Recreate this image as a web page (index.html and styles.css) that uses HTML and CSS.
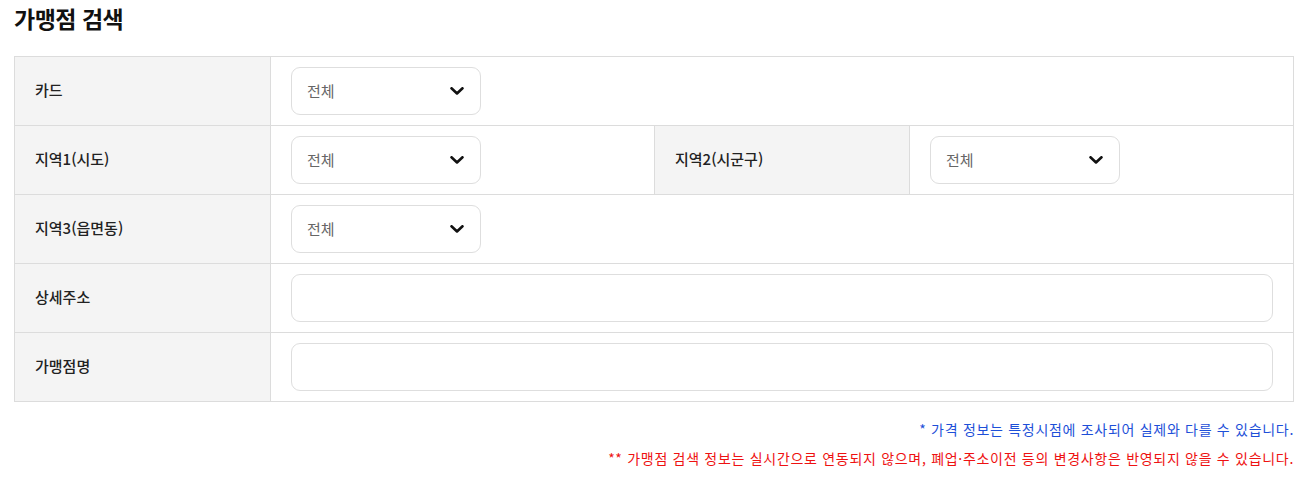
FILE: index.html
```html
<!DOCTYPE html>
<html lang="ko">
<head>
<meta charset="utf-8">
<title>가맹점 검색</title>
<link rel="stylesheet" href="styles.css">
</head>
<body>
<h2 class="title">가맹점 검색</h2>
<div class="form">
  <div class="row">
    <div class="label">카드</div>
    <div class="field wide">
      <div class="select"><span>전체</span><svg class="chev" viewBox="0 0 14 8" width="14" height="8"><path d="M1.5 1.3 L7 6.5 L12.5 1.3" fill="none" stroke="#111" stroke-width="2.6" stroke-linecap="round" stroke-linejoin="round"/></svg></div>
    </div>
  </div>
  <div class="row">
    <div class="label">지역1(시도)</div>
    <div class="field">
      <div class="select"><span>전체</span><svg class="chev" viewBox="0 0 14 8" width="14" height="8"><path d="M1.5 1.3 L7 6.5 L12.5 1.3" fill="none" stroke="#111" stroke-width="2.6" stroke-linecap="round" stroke-linejoin="round"/></svg></div>
    </div>
    <div class="label">지역2(시군구)</div>
    <div class="field">
      <div class="select"><span>전체</span><svg class="chev" viewBox="0 0 14 8" width="14" height="8"><path d="M1.5 1.3 L7 6.5 L12.5 1.3" fill="none" stroke="#111" stroke-width="2.6" stroke-linecap="round" stroke-linejoin="round"/></svg></div>
    </div>
  </div>
  <div class="row">
    <div class="label">지역3(읍면동)</div>
    <div class="field wide">
      <div class="select"><span>전체</span><svg class="chev" viewBox="0 0 14 8" width="14" height="8"><path d="M1.5 1.3 L7 6.5 L12.5 1.3" fill="none" stroke="#111" stroke-width="2.6" stroke-linecap="round" stroke-linejoin="round"/></svg></div>
    </div>
  </div>
  <div class="row">
    <div class="label">상세주소</div>
    <div class="field wide"><div class="input"></div></div>
  </div>
  <div class="row">
    <div class="label">가맹점명</div>
    <div class="field wide"><div class="input"></div></div>
  </div>
</div>
<div class="notes">
  <p class="note blue">* 가격 정보는 특정시점에 조사되어 실제와 다를 수 있습니다.</p>
  <p class="note red">** 가맹점 검색 정보는 실시간으로 연동되지 않으며, 폐업·주소이전 등의 변경사항은 반영되지 않을 수 있습니다.</p>
</div>
</body>
</html>
```
FILE: styles.css
```css
* { box-sizing: border-box; }
body {
  margin: 0;
  padding: 0 14px;
  font-family: "Noto Sans CJK KR", "Noto Sans", sans-serif;
  color: #222;
  background: #fff;
}
.title {
  margin: 0;
  padding-top: 1px;
  height: 56px;
  font-size: 23px;
  line-height: 34px;
  font-weight: 700;
  color: #111;
  letter-spacing: -0.5px;
}
.form {
  border: 1px solid #dcdcdc;
  border-bottom: none;
}
.row {
  display: grid;
  grid-template-columns: 256px 384px 255px 1fr;
  border-bottom: 1px solid #dcdcdc;
  height: 69px;
}
.label {
  background: #f4f4f4;
  display: flex;
  align-items: center;
  padding: 0 0 3px 20px;
  font-size: 15px;
  font-weight: 500;
  color: #222;
  border-right: 1px solid #dcdcdc;
}
.field {
  display: flex;
  align-items: center;
  padding: 0 20px;
  border-right: 1px solid #dcdcdc;
}
.field:last-child { border-right: none; }
.field.wide { grid-column: 2 / 5; }
.select {
  width: 190px;
  height: 48px;
  border: 1px solid #dedede;
  border-radius: 9px;
  display: flex;
  align-items: center;
  justify-content: space-between;
  padding: 0 16px 2px 15px;
  font-size: 15px;
  color: #666;
  background: #fff;
}
.select .chev { display: block; margin-top: 2px; }
.input {
  width: 982px;
  height: 48px;
  border: 1px solid #dedede;
  border-radius: 9px;
  background: #fff;
}
.notes {
  padding-top: 13px;
  text-align: right;
}
.note {
  margin: 0;
  font-size: 14px;
  line-height: 29px;
  letter-spacing: 0.7px;
}
.note.blue { color: #1d4fd8; }
.note.red { color: #ee1111; }
```
